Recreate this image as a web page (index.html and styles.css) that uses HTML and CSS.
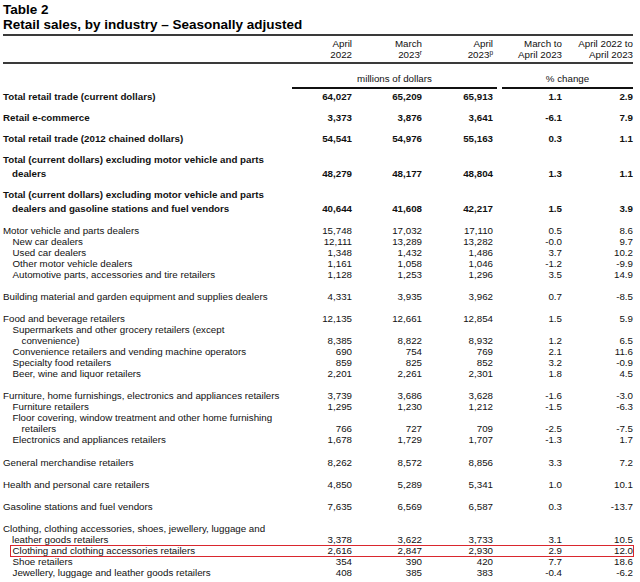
FILE: index.html
```html
<!DOCTYPE html>
<html lang="en">
<head>
<meta charset="utf-8">
<title>Table 2 – Retail sales, by industry</title>
<link rel="stylesheet" href="styles.css">
</head>
<body>
<div class="page">
  <h1 class="title">Table 2<br>Retail sales, by industry – Seasonally adjusted</h1>
  <div class="table">
    <div class="row head">
      <div class="lab"></div>
      <div class="n">April<br>2022</div>
      <div class="n">March<br>2023<sup>r</sup></div>
      <div class="n">April<br>2023<sup>p</sup></div>
      <div class="n">March to<br>April 2023</div>
      <div class="n">April 2022 to<br>April 2023</div>
    </div>
    <div class="row units">
      <div class="unit money">millions of dollars</div>
      <div class="unit pct">% change</div>
    </div>

    <div class="group bold">
      <div class="row"><div class="lab">Total retail trade (current dollars)</div><div class="n">64,027</div><div class="n">65,209</div><div class="n">65,913</div><div class="n">1.1</div><div class="n">2.9</div></div>
      <div class="row"><div class="lab">Retail e-commerce</div><div class="n">3,373</div><div class="n">3,876</div><div class="n">3,641</div><div class="n">-6.1</div><div class="n">7.9</div></div>
      <div class="row"><div class="lab">Total retail trade (2012 chained dollars)</div><div class="n">54,541</div><div class="n">54,976</div><div class="n">55,163</div><div class="n">0.3</div><div class="n">1.1</div></div>
      <div class="row"><div class="lab">Total (current dollars) excluding motor vehicle and parts<br>dealers</div><div class="n">48,279</div><div class="n">48,177</div><div class="n">48,804</div><div class="n">1.3</div><div class="n">1.1</div></div>
      <div class="row"><div class="lab">Total (current dollars) excluding motor vehicle and parts<br>dealers and gasoline stations and fuel vendors</div><div class="n">40,644</div><div class="n">41,608</div><div class="n">42,217</div><div class="n">1.5</div><div class="n">3.9</div></div>
    </div>

    <div class="body">
      <div class="group">
        <div class="row"><div class="lab">Motor vehicle and parts dealers</div><div class="n">15,748</div><div class="n">17,032</div><div class="n">17,110</div><div class="n">0.5</div><div class="n">8.6</div></div>
        <div class="row"><div class="lab sub">New car dealers</div><div class="n">12,111</div><div class="n">13,289</div><div class="n">13,282</div><div class="n">-0.0</div><div class="n">9.7</div></div>
        <div class="row"><div class="lab sub">Used car dealers</div><div class="n">1,348</div><div class="n">1,432</div><div class="n">1,486</div><div class="n">3.7</div><div class="n">10.2</div></div>
        <div class="row"><div class="lab sub">Other motor vehicle dealers</div><div class="n">1,161</div><div class="n">1,058</div><div class="n">1,046</div><div class="n">-1.2</div><div class="n">-9.9</div></div>
        <div class="row"><div class="lab sub">Automotive parts, accessories and tire retailers</div><div class="n">1,128</div><div class="n">1,253</div><div class="n">1,296</div><div class="n">3.5</div><div class="n">14.9</div></div>
      </div>
      <div class="group">
        <div class="row"><div class="lab">Building material and garden equipment and supplies dealers</div><div class="n">4,331</div><div class="n">3,935</div><div class="n">3,962</div><div class="n">0.7</div><div class="n">-8.5</div></div>
      </div>
      <div class="group">
        <div class="row"><div class="lab">Food and beverage retailers</div><div class="n">12,135</div><div class="n">12,661</div><div class="n">12,854</div><div class="n">1.5</div><div class="n">5.9</div></div>
        <div class="row"><div class="lab sub">Supermarkets and other grocery retailers (except<br>convenience)</div><div class="n">8,385</div><div class="n">8,822</div><div class="n">8,932</div><div class="n">1.2</div><div class="n">6.5</div></div>
        <div class="row"><div class="lab sub">Convenience retailers and vending machine operators</div><div class="n">690</div><div class="n">754</div><div class="n">769</div><div class="n">2.1</div><div class="n">11.6</div></div>
        <div class="row"><div class="lab sub">Specialty food retailers</div><div class="n">859</div><div class="n">825</div><div class="n">852</div><div class="n">3.2</div><div class="n">-0.9</div></div>
        <div class="row"><div class="lab sub">Beer, wine and liquor retailers</div><div class="n">2,201</div><div class="n">2,261</div><div class="n">2,301</div><div class="n">1.8</div><div class="n">4.5</div></div>
      </div>
      <div class="group">
        <div class="row"><div class="lab">Furniture, home furnishings, electronics and appliances retailers</div><div class="n">3,739</div><div class="n">3,686</div><div class="n">3,628</div><div class="n">-1.6</div><div class="n">-3.0</div></div>
        <div class="row"><div class="lab sub">Furniture retailers</div><div class="n">1,295</div><div class="n">1,230</div><div class="n">1,212</div><div class="n">-1.5</div><div class="n">-6.3</div></div>
        <div class="row"><div class="lab sub">Floor covering, window treatment and other home furnishing<br>retailers</div><div class="n">766</div><div class="n">727</div><div class="n">709</div><div class="n">-2.5</div><div class="n">-7.5</div></div>
        <div class="row"><div class="lab sub">Electronics and appliances retailers</div><div class="n">1,678</div><div class="n">1,729</div><div class="n">1,707</div><div class="n">-1.3</div><div class="n">1.7</div></div>
      </div>
      <div class="group">
        <div class="row"><div class="lab">General merchandise retailers</div><div class="n">8,262</div><div class="n">8,572</div><div class="n">8,856</div><div class="n">3.3</div><div class="n">7.2</div></div>
      </div>
      <div class="group">
        <div class="row"><div class="lab">Health and personal care retailers</div><div class="n">4,850</div><div class="n">5,289</div><div class="n">5,341</div><div class="n">1.0</div><div class="n">10.1</div></div>
      </div>
      <div class="group">
        <div class="row"><div class="lab">Gasoline stations and fuel vendors</div><div class="n">7,635</div><div class="n">6,569</div><div class="n">6,587</div><div class="n">0.3</div><div class="n">-13.7</div></div>
      </div>
      <div class="group">
        <div class="row"><div class="lab">Clothing, clothing accessories, shoes, jewellery, luggage and<br>leather goods retailers</div><div class="n">3,378</div><div class="n">3,622</div><div class="n">3,733</div><div class="n">3.1</div><div class="n">10.5</div></div>
        <div class="row highlight"><div class="lab sub">Clothing and clothing accessories retailers</div><div class="n">2,616</div><div class="n">2,847</div><div class="n">2,930</div><div class="n">2.9</div><div class="n">12.0</div></div>
        <div class="row"><div class="lab sub">Shoe retailers</div><div class="n">354</div><div class="n">390</div><div class="n">420</div><div class="n">7.7</div><div class="n">18.6</div></div>
        <div class="row"><div class="lab sub">Jewellery, luggage and leather goods retailers</div><div class="n">408</div><div class="n">385</div><div class="n">383</div><div class="n">-0.4</div><div class="n">-6.2</div></div>
      </div>
    </div>
  </div>
</div>
</body>
</html>
```

FILE: styles.css
```css
html, body {
  margin: 0;
  padding: 0;
  background: #ffffff;
}

body {
  font-family: "Liberation Sans", Arial, sans-serif;
  color: #111111;
  font-size: 9.75px;
}

.page {
  width: 630px;
  padding: 2px 0 0 3px;
}

.title {
  margin: 0;
  font-size: 13.5px;
  line-height: 15px;
  font-weight: bold;
  color: #000000;
}

.table {
  margin-top: 2px;
  border-top: 2px solid #3a3a3a;
}

.row {
  display: grid;
  grid-template-columns: 289px 60px 70px 71px 69px 71px;
  align-items: end;
  line-height: 11px;
  white-space: nowrap;
}

.n {
  text-align: right;
}

.lab {
  padding-left: 9px;
  text-indent: -9px;
}

.lab.sub {
  padding-left: 18.5px;
}

sup {
  font-size: 6.5px;
  line-height: 0;
  vertical-align: 3px;
}

.head {
  height: 26px;
  align-items: center;
  border-bottom: 2px solid #3a3a3a;
}

.units {
  padding-top: 9px;
}

.unit {
  text-align: center;
  padding-bottom: 3px;
  border-bottom: 2px solid #111111;
}

.money {
  grid-column: 2 / 5;
  margin-right: -4px;
}

.pct {
  grid-column: 5 / 7;
  margin-left: 9px;
}

.group {
  display: flex;
  flex-direction: column;
}

.bold {
  margin-top: 1px;
  gap: 7px;
  font-weight: bold;
}

.bold .row {
  line-height: 14px;
}

.body {
  margin-top: 8.5px;
  display: flex;
  flex-direction: column;
  gap: 11.25px;
}

.highlight {
  position: relative;
}

.highlight::after {
  content: "";
  position: absolute;
  left: 7px;
  right: -1px;
  top: 0;
  bottom: -1px;
  border: 1px solid #d9272e;
  pointer-events: none;
}
```
